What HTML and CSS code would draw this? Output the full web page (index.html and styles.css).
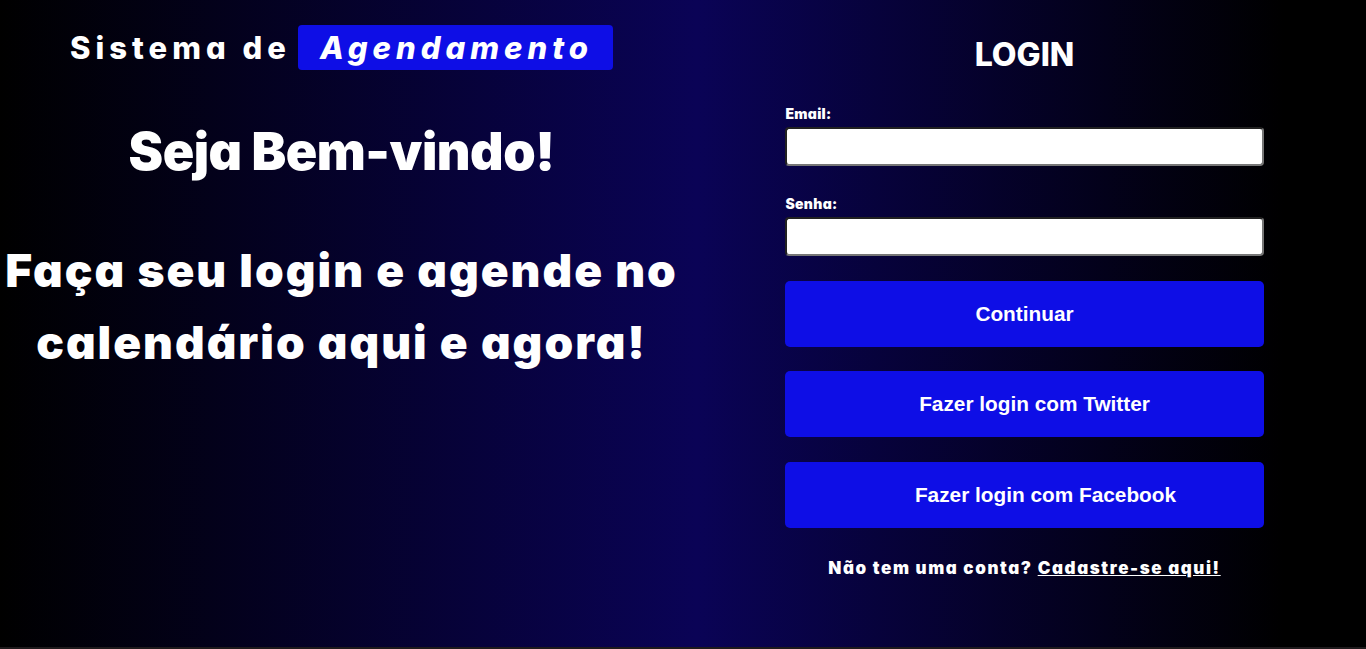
FILE: index.html
```html
<!DOCTYPE html>
<html lang="pt-BR">
<head>
<meta charset="utf-8">
<title>Sistema de Agendamento - Login</title>
<link rel="stylesheet" href="styles.css">
</head>
<body>
<main class="page">
  <section class="intro">
    <header class="brand">
      <span class="brand-text">Sistema de</span>
      <span class="brand-tag">Agendamento</span>
    </header>
    <h1 class="welcome">Seja Bem-vindo!</h1>
    <h2 class="cta">Faça seu login e agende no calendário aqui e agora!</h2>
  </section>
  <section class="login">
    <h2 class="login-title">LOGIN</h2>
    <form class="form">
      <label class="field-label" for="email">Email:</label>
      <input class="field" id="email" type="email">
      <label class="field-label" for="senha">Senha:</label>
      <input class="field" id="senha" type="password">
      <button class="btn" type="button">Continuar</button>
      <button class="btn btn-twitter" type="button">Fazer login com Twitter</button>
      <button class="btn btn-facebook" type="button">Fazer login com Facebook</button>
    </form>
    <p class="signup">Não tem uma conta? <a class="signup-link" href="#">Cadastre-se aqui!</a></p>
  </section>
</main>
<div class="bottom-strip"></div>
</body>
</html>
```

FILE: styles.css
```css
html, body {
  margin: 0;
  padding: 0;
}

body {
  background: #000;
  color: #fff;
  font-family: Inter, "Noto Sans", sans-serif;
  font-feature-settings: "cv11" 1;
  overflow: hidden;
}

.page {
  height: 647px;
  display: grid;
  grid-template-columns: 1fr 1fr;
  background: linear-gradient(90deg, #000 0%, #0a0356 51%, #000 94%);
}

.bottom-strip {
  height: 2px;
  background: #1e1a1c;
}

.intro {
  display: flex;
  flex-direction: column;
  align-items: center;
  padding-top: 25px;
  text-align: center;
}

.brand {
  display: flex;
  align-items: center;
  gap: 7px;
  height: 45px;
}

.brand-text {
  font-size: 31px;
  font-weight: 800;
  letter-spacing: 5px;
}

.brand-tag {
  background: #0e0ee6;
  border-radius: 4px;
  font-size: 31px;
  font-weight: 800;
  font-style: italic;
  letter-spacing: 5px;
  padding: 0 20px 0 22px;
  height: 45px;
  line-height: 45px;
}

.welcome {
  margin: 47px 0 0;
  font-size: 52px;
  font-weight: 900;
  line-height: 70px;
  letter-spacing: -0.5px;
}

.cta {
  margin: 47px 0 0;
  font-size: 46px;
  font-weight: 900;
  line-height: 72px;
  letter-spacing: 2px;
}

.login {
  display: flex;
  flex-direction: column;
  align-items: center;
  padding-top: 31px;
}

.login-title {
  margin: 0;
  font-size: 32px;
  font-weight: 800;
  line-height: 48px;
}

.form {
  width: 70%;
  display: flex;
  flex-direction: column;
  margin-top: 26px;
}

.field-label {
  font-size: 14px;
  font-weight: 900;
  line-height: 18px;
  letter-spacing: 0.3px;
}

.field {
  height: 39px;
  box-sizing: border-box;
  margin: 4px 0 29px;
  border: 2px inset #767676;
  border-radius: 4px;
  background: #fff;
}

.form .field:nth-of-type(2) {
  margin-bottom: 25px;
}

.btn {
  height: 66px;
  margin-bottom: 24px;
  border: 0;
  border-radius: 5px;
  background: #0e0ee6;
  color: #fff;
  font-family: "Liberation Sans", Arial, sans-serif;
  font-size: 20.8px;
  font-weight: 700;
}

.btn-twitter {
  padding-left: 26px;
}

.btn-facebook {
  margin-top: 1px;
  padding-left: 48px;
}

.signup {
  margin: 6px 0 0;
  font-size: 17px;
  font-weight: 900;
  letter-spacing: 1.6px;
}

.signup-link {
  color: #fff;
  text-decoration: underline;
}
```
